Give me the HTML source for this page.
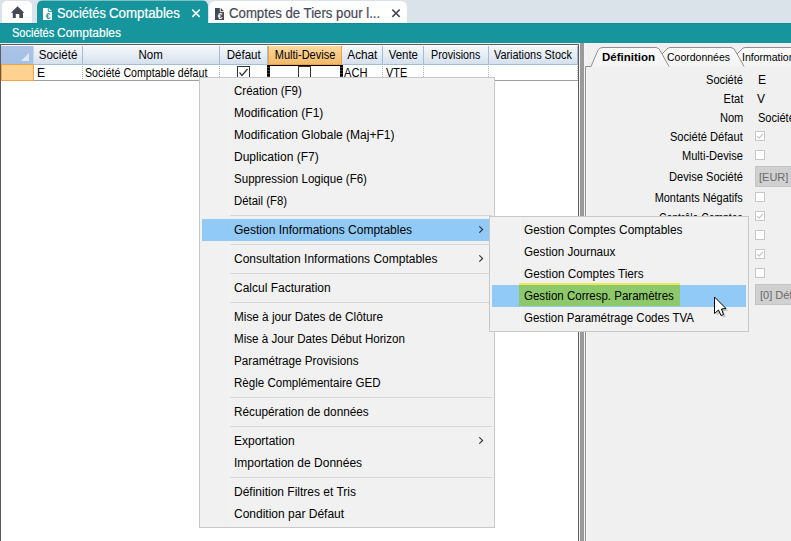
<!DOCTYPE html>
<html><head><meta charset="utf-8">
<style>
*{box-sizing:border-box;margin:0;padding:0}
html,body{width:791px;height:541px;overflow:hidden;background:#fff;font-family:"Liberation Sans",sans-serif;position:relative}
.a{position:absolute}
.t{position:absolute;white-space:nowrap}
#tabbar{left:0;top:0;width:791px;height:23px;background:#dae2ea}
#home{left:2px;top:1px;width:30px;height:22px;background:#fff;border-radius:5px 5px 0 0}
#tab1{left:37px;top:0px;width:171px;height:23px;background:linear-gradient(#7fc0c4 0 1px,#17959d 1px);border-radius:6px 6px 0 0}
#tab2{left:209px;top:1px;width:198px;height:22px;background:#fff;border-radius:6px 6px 0 0}
#teal{left:0;top:23px;width:791px;height:21px;background:linear-gradient(#17959d 0 20px,#f2ecec 20px 21px)}
/* grid */
#grid{left:0;top:44px;width:579px;height:497px;background:#fff;border-left:1px solid #5c5c5c;border-top:1px solid #5c5c5c;border-right:1px solid #5c5c5c}
.hd{position:absolute;top:46px;height:19px;background:linear-gradient(#f6f9fc,#d5e0ee);border-right:1px solid #a6bbd4;border-bottom:1px solid #a6bbd4;font-size:12px;color:#000;text-align:center;line-height:19px}
.hd span{display:inline-block;transform-origin:50% 50%}
.cell{position:absolute;top:66px;height:15px;font-size:12px;line-height:15px;color:#000;white-space:nowrap;transform-origin:0 0}
.dv{position:absolute;top:65px;height:15px;width:1px;background:repeating-linear-gradient(#fff 0 1px,#b4b4b4 1px 2px)}
/* splitter */
#split{left:579px;top:43px;width:8px;height:498px;background:linear-gradient(90deg,#f4f4f4 0 1px,#9a9a9a 1px 5px,#f6f6f6 5px 6px,#f0f0f0 6px 7px,#f6f6f6 7px 8px)}
#right{left:587px;top:43px;width:205px;height:498px;background:#f0f0f0}
.lbl{position:absolute;font-size:12px;color:#000;white-space:nowrap;text-align:right;right:48px;transform:scaleX(0.925);transform-origin:100% 0;line-height:14px}
.chk{position:absolute;left:755px;width:10px;height:10px;border:1px solid #c8c8c8;background:#fff}
/* menu */
.menu{position:absolute;background:#f1f1f1;border:1px solid #c8c8c8}
.mi{position:absolute;font-size:12px;color:#000;white-space:nowrap}
.sep{position:absolute;height:1px;background:#d7d7d7}
.arr{position:absolute;width:6px;height:9px}
</style></head><body>
<div id="tabbar" class="a"></div>
<div id="home" class="a"></div>
<svg class="a" style="left:0;top:0" width="40" height="24" viewBox="0 0 40 24">
  <path d="M11 12.8 L17.5 6.3 L24.3 12.8 L23 12.8 L23 18 L19.3 18 L19.3 14 L15.8 14 L15.8 18 L12.8 18 L12.8 12.8 Z" fill="#464955"/>
</svg>
<div id="tab1" class="a"></div>
<svg class="a" style="left:42px;top:7px" width="11" height="14" viewBox="0 0 11 14">
  <path d="M1 1 L6.8 1 L10 4.3 L10 13 L1 13 Z" fill="#fff"/>
  <path d="M6.3 1 L6.3 4.6 L10 4.6" fill="none" stroke="#17959d" stroke-width="0.9"/>
  <text x="6" y="12" font-family="Liberation Sans" font-size="8.5" font-weight="bold" fill="#17959d" text-anchor="middle">€</text>
</svg>
<div class="t" style="left:57px;top:5px;font-size:14px;color:#fff;line-height:17px;-webkit-text-stroke:0.2px #fff;transform:scaleX(0.909);transform-origin:0 0">Sociétés</div><div class="t" style="left:109px;top:5px;font-size:14px;color:#fff;line-height:17px;-webkit-text-stroke:0.2px #fff;transform:scaleX(0.949);transform-origin:0 0">Comptables</div>
<svg class="a" style="left:190px;top:7px" width="12" height="12" viewBox="0 0 12 12"><path d="M2.3 2.6 L9.7 9.9 M9.7 2.6 L2.3 9.9" stroke="#fff" stroke-width="1.5"/></svg>
<div id="tab2" class="a"></div>
<svg class="a" style="left:214px;top:7px" width="11" height="14" viewBox="0 0 11 14">
  <path d="M1 1 L6.8 1 L10 4.3 L10 13 L1 13 Z" fill="#464955"/>
  <path d="M6.3 1 L6.3 4.6 L10 4.6" fill="none" stroke="#fff" stroke-width="0.9"/>
  <text x="6" y="12" font-family="Liberation Sans" font-size="8.5" font-weight="bold" fill="#fff" text-anchor="middle">€</text>
</svg>
<div class="t" style="left:229px;top:5px;font-size:14px;color:#464955;line-height:17px;-webkit-text-stroke:0.2px #464955;transform:scaleX(0.943);transform-origin:0 0">Comptes de Tiers pour l...</div>
<svg class="a" style="left:390px;top:7px" width="12" height="12" viewBox="0 0 12 12"><path d="M2.3 2.6 L9.7 9.9 M9.7 2.6 L2.3 9.9" stroke="#464955" stroke-width="1.5"/></svg>

<div id="teal" class="a"></div><div class="a" style="left:0;top:23px;width:37px;height:1px;background:#0f8d96"></div><div class="a" style="left:208px;top:23px;width:583px;height:1px;background:#0f8d96"></div>
<div class="t" style="left:12px;top:26px;font-size:12px;color:#fff;line-height:15px;-webkit-text-stroke:0.15px #fff;transform:scaleX(0.918);transform-origin:0 0">Sociétés</div><div class="t" style="left:57px;top:26px;font-size:12px;color:#fff;line-height:15px;-webkit-text-stroke:0.15px #fff;transform:scaleX(1.0);transform-origin:0 0">Comptables</div>

<!-- grid -->
<div id="grid" class="a"></div>
<div class="a" style="left:1px;top:45px;width:577px;height:1px;background:#fff"></div>
<div class="hd" style="left:1px;width:33px;background:linear-gradient(#aac3e6,#a6c0e4);border-right:1px solid #c9d7ea"></div>
<svg class="a" style="left:20px;top:52px" width="10" height="10"><path d="M9 1 L9 9 L1 9 Z" fill="#dfe8f3"/></svg>
<div class="hd" style="left:34px;width:49px"><span style="transform:scaleX(0.965)">Société</span></div>
<div class="hd" style="left:83px;width:137px"><span style="transform:scaleX(0.957)">Nom</span></div>
<div class="hd" style="left:220px;width:48px"><span style="transform:scaleX(0.963)">Défaut</span></div>
<div class="hd" style="left:268px;width:74px;background:linear-gradient(#fad9a0,#f3b968);border-left:1px solid #f2a040;border-right:1px solid #f2a040;border-bottom:1px solid #f2a040"><span style="transform:scaleX(0.917)">Multi-Devise</span></div>
<div class="hd" style="left:342px;width:41px"><span style="transform:scaleX(0.98)">Achat</span></div>
<div class="hd" style="left:383px;width:41px"><span style="transform:scaleX(0.95)">Vente</span></div>
<div class="hd" style="left:424px;width:65px"><span style="transform:scaleX(0.89)">Provisions</span></div>
<div class="hd" style="left:489px;width:89px"><span style="transform:scaleX(0.907)">Variations Stock</span></div>
<!-- row -->
<div class="a" style="left:1px;top:64px;width:33px;height:17px;background:#fdd38f;border:1px solid #f3a448;border-top:1px solid #f3a448"></div>
<div class="cell" style="left:37px;transform:scaleX(1.0)">E</div>
<div class="cell" style="left:85px;transform:scaleX(0.886)">Société Comptable défaut</div>
<div class="dv" style="left:82px"></div>
<div class="dv" style="left:219px"></div>
<div class="dv" style="left:382px"></div>
<div class="dv" style="left:423px"></div>
<div class="dv" style="left:488px"></div><div class="dv" style="left:577px"></div>
<div class="a" style="left:34px;top:80px;width:544px;height:1px;background:#a0a0a0"></div>
<div class="a" style="left:237px;top:66px;width:13px;height:13px;border:1px solid #333;background:#fff"></div>
<svg class="a" style="left:237px;top:66px" width="13" height="13"><path d="M2.5 6.5 L5 9.5 L10.5 3" fill="none" stroke="#333" stroke-width="1.2"/></svg>
<!-- focused cell -->
<div class="a" style="left:267px;top:65px;width:76px;height:15px;background:#fff;border-top:1px solid #000"></div><div class="a" style="left:267px;top:65px;width:3px;height:15px;background:repeating-linear-gradient(#000 0 2px,#3a3a3a 2px 3px)"></div><div class="a" style="left:340px;top:65px;width:3px;height:15px;background:repeating-linear-gradient(#000 0 2px,#3a3a3a 2px 3px)"></div>
<div class="a" style="left:298px;top:66px;width:13px;height:13px;border:1px solid #333;background:#fff"></div>
<div class="cell" style="left:344px;transform:scaleX(0.926)">ACH</div>
<div class="cell" style="left:386px;transform:scaleX(0.905)">VTE</div>

<!-- splitter and right panel -->
<div id="split" class="a"></div>
<div id="right" class="a"></div>

<!-- tab control -->
<svg class="a" style="left:0;top:0" width="791" height="541" viewBox="0 0 791 541">
  <defs><linearGradient id="tg" x1="0" y1="0" x2="0" y2="1"><stop offset="0" stop-color="#fcfcfc"/><stop offset="1" stop-color="#f3f3f3"/></linearGradient></defs>
  <path d="M744 66.5 L736 52 Q734 47.5 731 47.5 L670 47.5 Q668 47.5 666 50 L662 54 L669 66.5 Z" fill="url(#tg)"/>
  <path d="M791 47.5 L745 47.5 Q743 47.5 741 50 L737 54 L744 66.5 L791 66.5 Z" fill="url(#tg)"/>
  <path d="M591 66.5 L597 52.5 Q598.5 47.5 603 47.5 L656 47.5 Q659 47.5 661 52 L669 66.5 Z" fill="url(#tg)"/>
  <path d="M585.5 541 L585.5 66.5 L591 66.5 L597 52.5 Q598.5 47.5 603 47.5 L656 47.5 Q659 47.5 661 52 L669 66.5" fill="none" stroke="#8e8e8e" stroke-width="1"/>
  <path d="M662 54 L666 50 Q668 47.5 670 47.5 L731 47.5 Q734 47.5 736 52 L744 66.5" fill="none" stroke="#8e8e8e" stroke-width="1"/>
  <path d="M737 54 L741 50 Q743 47.5 745 47.5 L791 47.5" fill="none" stroke="#8e8e8e" stroke-width="1"/>
</svg>
<div class="t" style="left:602px;top:51px;font-size:11.5px;font-weight:bold;color:#000">Définition</div>
<div class="t" style="left:667px;top:51px;font-size:10.5px;color:#000">Coordonnées</div>
<div class="t" style="left:742px;top:51px;font-size:10.5px;color:#000">Informations</div>

<div class="lbl" style="top:73px">Société</div>
<div class="t" style="left:758px;top:73px;font-size:12px;line-height:14px">E</div>
<div class="lbl" style="top:92px">Etat</div>
<div class="t" style="left:757px;top:92px;font-size:12px;line-height:14px">V</div>
<div class="lbl" style="top:111px">Nom</div>
<div class="t" style="left:758px;top:111px;font-size:12px;line-height:14px;transform:scaleX(0.92);transform-origin:0 0">Société</div>
<div class="lbl" style="top:130px">Société Défaut</div>
<div class="lbl" style="top:149px">Multi-Devise</div>
<div class="lbl" style="top:170px">Devise Société</div>
<div class="lbl" style="top:191px;transform:scaleX(0.91)">Montants Négatifs</div>
<div class="lbl" style="top:211px;transform:scaleX(0.865)">Contrôle Comptes</div>
<div class="chk" style="top:131px"></div><svg class="a" style="left:755px;top:131px" width="10" height="10"><path d="M2 5 L4 7.2 L8 2.8" fill="none" stroke="#c2c2c2" stroke-width="1.1"/></svg>
<div class="chk" style="top:150px"></div>
<div class="a" style="left:755px;top:166px;width:40px;height:21px;background:#d0d0d0;border:1px solid #c4c4c4"></div>
<div class="t" style="left:759px;top:171px;font-size:11px;color:#6a6a6a">[EUR]</div>
<div class="chk" style="top:192px"></div>
<div class="chk" style="top:211px"></div><svg class="a" style="left:755px;top:211px" width="10" height="10"><path d="M2 5 L4 7.2 L8 2.8" fill="none" stroke="#c2c2c2" stroke-width="1.1"/></svg>
<div class="chk" style="top:230px"></div>
<div class="chk" style="top:249px"></div><svg class="a" style="left:755px;top:249px" width="10" height="10"><path d="M2 5 L4 7.2 L8 2.8" fill="none" stroke="#c2c2c2" stroke-width="1.1"/></svg>
<div class="chk" style="top:268px"></div>
<div class="a" style="left:755px;top:284px;width:40px;height:21px;background:#d0d0d0;border:1px solid #c4c4c4"></div>
<div class="t" style="left:760px;top:289px;font-size:11px;color:#6a6a6a">[0] Déf</div>

<!-- main menu -->
<div class="menu" style="left:199px;top:77px;width:296px;height:451px"></div>
<div class="a" style="left:230px;top:78px;width:1px;height:449px;background:#f4f4f4"></div>
<div class="a" style="left:202px;top:219px;width:287px;height:22px;background:#91c9f7"></div>
<div class="mi" style="left:234px;top:84px;transform:scaleX(0.96);transform-origin:0 0">Création (F9)</div>
<div class="mi" style="left:234px;top:106px">Modification (F1)</div>
<div class="mi" style="left:234px;top:128px">Modification Globale (Maj+F1)</div>
<div class="mi" style="left:234px;top:150px">Duplication (F7)</div>
<div class="mi" style="left:234px;top:172px;transform:scaleX(0.963);transform-origin:0 0">Suppression Logique (F6)</div>
<div class="mi" style="left:234px;top:194px;transform:scaleX(0.946);transform-origin:0 0">Détail (F8)</div>
<div class="sep" style="left:230px;top:215px;width:262px"></div>
<div class="mi" style="left:234px;top:223px">Gestion Informations Comptables</div>
<div class="sep" style="left:230px;top:244px;width:262px"></div>
<div class="mi" style="left:234px;top:252px">Consultation Informations Comptables</div>
<div class="sep" style="left:230px;top:273px;width:262px"></div>
<div class="mi" style="left:234px;top:281px">Calcul Facturation</div>
<div class="sep" style="left:230px;top:302px;width:262px"></div>
<div class="mi" style="left:234px;top:310px;transform:scaleX(0.98);transform-origin:0 0">Mise à jour Dates de Clôture</div>
<div class="mi" style="left:234px;top:332px;transform:scaleX(0.967);transform-origin:0 0">Mise à Jour Dates Début Horizon</div>
<div class="mi" style="left:234px;top:354px;transform:scaleX(0.973);transform-origin:0 0">Paramétrage Provisions</div>
<div class="mi" style="left:234px;top:376px;transform:scaleX(0.964);transform-origin:0 0">Règle Complémentaire GED</div>
<div class="sep" style="left:230px;top:397px;width:262px"></div>
<div class="mi" style="left:234px;top:405px;transform:scaleX(0.98);transform-origin:0 0">Récupération de données</div>
<div class="sep" style="left:230px;top:426px;width:262px"></div>
<div class="mi" style="left:234px;top:434px">Exportation</div>
<div class="mi" style="left:234px;top:456px">Importation de Données</div>
<div class="sep" style="left:230px;top:477px;width:262px"></div>
<div class="mi" style="left:234px;top:485px">Définition Filtres et Tris</div>
<div class="mi" style="left:234px;top:507px">Condition par Défaut</div>
<svg class="arr" style="left:478px;top:225px" width="6" height="9"><path d="M1.3 1.3 L4.6 4.4 L1.3 7.6" fill="none" stroke="#2a2a2a" stroke-width="1.1"/></svg>
<svg class="arr" style="left:478px;top:254px" width="6" height="9"><path d="M1.3 1.3 L4.6 4.4 L1.3 7.6" fill="none" stroke="#2a2a2a" stroke-width="1.1"/></svg>
<svg class="arr" style="left:478px;top:436px" width="6" height="9"><path d="M1.3 1.3 L4.6 4.4 L1.3 7.6" fill="none" stroke="#2a2a2a" stroke-width="1.1"/></svg>

<!-- submenu -->
<div class="menu" style="left:489px;top:216px;width:260px;height:116px"></div>
<div class="a" style="left:520px;top:217px;width:1px;height:114px;background:#f4f4f4"></div>
<div class="a" style="left:492px;top:285px;width:254px;height:22px;background:#91c9f7"></div>
<div class="a" style="left:519px;top:283px;width:161px;height:2px;background:#ebe85a"></div>
<div class="a" style="left:519px;top:285px;width:161px;height:21px;background:#8dc96a"></div>
<div class="mi" style="left:524px;top:223px;transform:scaleX(0.99);transform-origin:0 0">Gestion Comptes Comptables</div>
<div class="mi" style="left:524px;top:245px;transform:scaleX(0.972);transform-origin:0 0">Gestion Journaux</div>
<div class="mi" style="left:524px;top:267px;transform:scaleX(0.98);transform-origin:0 0">Gestion Comptes Tiers</div>
<div class="mi" style="left:524px;top:289px;transform:scaleX(0.96);transform-origin:0 0">Gestion Corresp. Paramètres</div>
<div class="mi" style="left:524px;top:311px;transform:scaleX(0.957);transform-origin:0 0">Gestion Paramétrage Codes TVA</div>

<!-- cursor -->
<svg class="a" style="left:706px;top:290px" width="30" height="30" viewBox="0 0 30 30">
  <path d="M9.5 8 L9.5 24.5 L13.5 21 L16 26.5 L18.5 25.5 L16.5 20 L21 19.5 Z" fill="rgba(0,0,0,0.18)" transform="translate(1.2,1.2)"/>
  <path d="M8.5 7 L8.5 23.5 L12.5 20 L15 25.5 L17.5 24.5 L15.5 19 L20 18.5 Z" fill="#fff" stroke="#000" stroke-width="1" stroke-linejoin="miter"/>
</svg>
</body></html>
